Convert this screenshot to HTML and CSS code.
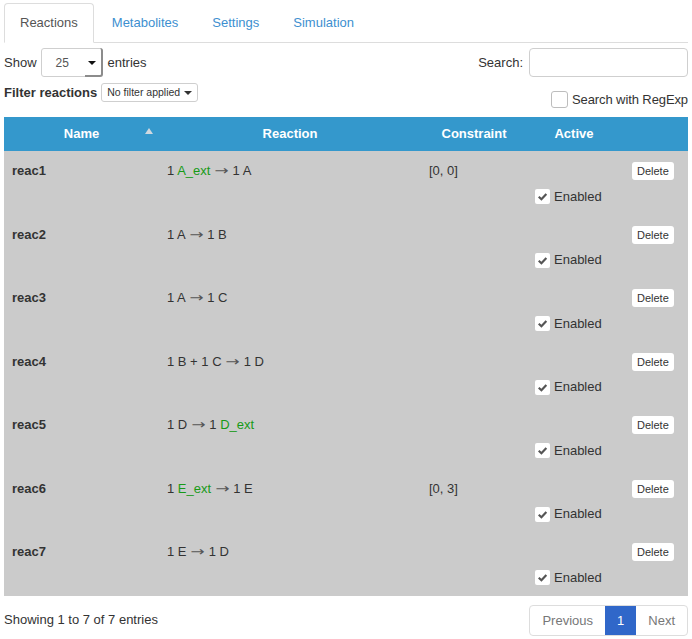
FILE: index.html
```html
<!DOCTYPE html>
<html>
<head>
<meta charset="utf-8">
<link rel="stylesheet" href="styles.css">
</head>
<body>
<div class="page">
  <ul class="tabs">
    <li class="tab active"><a>Reactions</a></li>
    <li class="tab"><a>Metabolites</a></li>
    <li class="tab"><a>Settings</a></li>
    <li class="tab"><a>Simulation</a></li>
  </ul>

  <div class="toolbar">
    <div class="length">
      <span>Show</span>
      <span class="select">25<span class="caret"></span></span>
      <span>entries</span>
    </div>
    <div class="search">
      <span>Search:</span>
      <span class="input"></span>
    </div>
  </div>

  <div class="toolbar2">
    <div class="filter">
      <b>Filter reactions</b>
      <span class="dropdown">No filter applied<span class="caret small"></span></span>
    </div>
    <label class="regexp"><span class="box"></span>Search with RegExp</label>
  </div>

  <table class="grid">
    <colgroup>
      <col class="c-name"><col class="c-reac"><col class="c-cons"><col class="c-act"><col class="c-del">
    </colgroup>
    <thead>
      <tr>
        <th class="sorted">Name<span class="sort"></span></th>
        <th>Reaction</th>
        <th>Constraint</th>
        <th>Active</th>
        <th></th>
      </tr>
    </thead>
    <tbody>
      <tr>
        <td class="name">reac1</td>
        <td>1 <span class="ext">A_ext</span> <span class="arr">→</span> 1 A</td>
        <td>[0, 0]</td>
        <td><label class="enabled"><span class="chk"><svg viewBox="0 0 14 14"><polyline points="3.5,7.2 6,9.6 10.6,4.6"/></svg></span>Enabled</label></td>
        <td class="del"><span class="btn">Delete</span></td>
      </tr>
      <tr>
        <td class="name">reac2</td>
        <td>1 A <span class="arr">→</span> 1 B</td>
        <td></td>
        <td><label class="enabled"><span class="chk"><svg viewBox="0 0 14 14"><polyline points="3.5,7.2 6,9.6 10.6,4.6"/></svg></span>Enabled</label></td>
        <td class="del"><span class="btn">Delete</span></td>
      </tr>
      <tr>
        <td class="name">reac3</td>
        <td>1 A <span class="arr">→</span> 1 C</td>
        <td></td>
        <td><label class="enabled"><span class="chk"><svg viewBox="0 0 14 14"><polyline points="3.5,7.2 6,9.6 10.6,4.6"/></svg></span>Enabled</label></td>
        <td class="del"><span class="btn">Delete</span></td>
      </tr>
      <tr>
        <td class="name">reac4</td>
        <td>1 B + 1 C <span class="arr">→</span> 1 D</td>
        <td></td>
        <td><label class="enabled"><span class="chk"><svg viewBox="0 0 14 14"><polyline points="3.5,7.2 6,9.6 10.6,4.6"/></svg></span>Enabled</label></td>
        <td class="del"><span class="btn">Delete</span></td>
      </tr>
      <tr>
        <td class="name">reac5</td>
        <td>1 D <span class="arr">→</span> 1 <span class="ext">D_ext</span></td>
        <td></td>
        <td><label class="enabled"><span class="chk"><svg viewBox="0 0 14 14"><polyline points="3.5,7.2 6,9.6 10.6,4.6"/></svg></span>Enabled</label></td>
        <td class="del"><span class="btn">Delete</span></td>
      </tr>
      <tr>
        <td class="name">reac6</td>
        <td>1 <span class="ext">E_ext</span> <span class="arr">→</span> 1 E</td>
        <td>[0, 3]</td>
        <td><label class="enabled"><span class="chk"><svg viewBox="0 0 14 14"><polyline points="3.5,7.2 6,9.6 10.6,4.6"/></svg></span>Enabled</label></td>
        <td class="del"><span class="btn">Delete</span></td>
      </tr>
      <tr>
        <td class="name">reac7</td>
        <td>1 E <span class="arr">→</span> 1 D</td>
        <td></td>
        <td><label class="enabled"><span class="chk"><svg viewBox="0 0 14 14"><polyline points="3.5,7.2 6,9.6 10.6,4.6"/></svg></span>Enabled</label></td>
        <td class="del"><span class="btn">Delete</span></td>
      </tr>
    </tbody>
  </table>

  <div class="footer">
    <div class="info">Showing 1 to 7 of 7 entries</div>
    <div class="pager">
      <span class="pg disabled">Previous</span>
      <span class="pg current">1</span>
      <span class="pg disabled">Next</span>
    </div>
  </div>
</div>
</body>
</html>
```

FILE: styles.css
```css
* { box-sizing: border-box; }

html, body {
  margin: 0;
  padding: 0;
  background: #fff;
}

body {
  font-family: "Liberation Sans", Arial, sans-serif;
  font-size: 13px;
  line-height: 18px;
  color: #333;
}

.page {
  padding: 3px 4px 0 4px;
}

/* Tabs */
.tabs {
  list-style: none;
  margin: 0;
  padding: 0;
  display: flex;
  border-bottom: 1px solid #ddd;
}

.tab {
  margin-bottom: -1px;
}

.tab a {
  display: block;
  margin-right: 2px;
  padding: 10px 15px 10px;
  border: 1px solid transparent;
  border-radius: 4px 4px 0 0;
  color: #3d8fd0;
}

.tab.active a {
  color: #555;
  background: #fff;
  border-color: #ddd #ddd transparent #ddd;
}

/* Toolbar rows */
.toolbar {
  display: flex;
  justify-content: space-between;
  align-items: center;
  margin-top: 5px;
  height: 29px;
}

.length,
.search {
  display: flex;
  align-items: center;
}

.length .select {
  position: relative;
  display: inline-flex;
  align-items: center;
  width: 62px;
  height: 29px;
  margin: 0 5px 0 4px;
  padding-left: 14px;
  border: 1px solid #cfcfcf;
  border-radius: 3px;
  font-size: 12px;
  color: #555;
}

.length .select::after {
  content: "";
  position: absolute;
  right: -1px;
  top: -1px;
  bottom: -1px;
  width: 16px;
  border-right: 2px solid #8c8c8c;
  border-bottom: 2px solid #8c8c8c;
  border-radius: 0 3px 3px 0;
}

.caret {
  position: absolute;
  right: 6px;
  top: 12px;
  width: 0;
  height: 0;
  border-left: 4px solid transparent;
  border-right: 4px solid transparent;
  border-top: 4px solid #111;
}

.search .input {
  display: block;
  width: 159px;
  height: 29px;
  margin-left: 6px;
  border: 1px solid #cfcfcf;
  border-radius: 4px;
}

.toolbar2 {
  display: flex;
  justify-content: space-between;
  align-items: flex-start;
  height: 35px;
  margin-top: 5px;
}

.filter {
  display: flex;
  align-items: center;
  margin-top: 1px;
  height: 19px;
}

.filter b {
  font-weight: bold;
}

.dropdown {
  display: inline-flex;
  align-items: center;
  margin-left: 4px;
  height: 19px;
  padding: 0 5px;
  border: 1px solid #cfcfcf;
  border-radius: 3px;
  font-size: 10.5px;
  line-height: 17px;
  color: #333;
}

.caret.small {
  position: static;
  margin-left: 4px;
  border-left-width: 4px;
  border-right-width: 4px;
  border-top: 4px solid #333;
}

.regexp {
  display: flex;
  align-items: center;
  margin-top: 9px;
  line-height: 17px;
  letter-spacing: -0.1px;
  white-space: nowrap;
}

.regexp .box {
  display: inline-block;
  width: 17px;
  height: 17px;
  margin-right: 4px;
  border: 1px solid #bdbdbd;
  border-radius: 3px;
  background: #fff;
}

/* Table */
.grid {
  width: 684px;
  border-collapse: collapse;
  table-layout: fixed;
}

.c-name { width: 155px; }
.c-reac { width: 262px; }
.c-cons { width: 106px; }
.c-act  { width: 94px; }
.c-del  { width: 67px; }

.grid th {
  position: relative;
  background: #3498cc;
  color: #fff;
  font-weight: bold;
  text-align: center;
  padding: 8px 8px;
  line-height: 18px;
  height: 34px;
}

.sort {
  position: absolute;
  right: 6px;
  top: 11px;
  width: 0;
  height: 0;
  border-left: 4px solid transparent;
  border-right: 4px solid transparent;
  border-bottom: 6px solid #cfd8df;
}

.grid td {
  background: #cbcbcb;
  vertical-align: top;
  padding: 11px 8px 9px 8px;
  line-height: 18px;
}

.grid td.name {
  font-weight: bold;
}

.grid td.del {
  padding-left: 11px;
}

.ext {
  color: #179a17;
}

.arr {
  display: inline-block;
  font-family: "DejaVu Sans", sans-serif;
  font-size: 13px;
  line-height: 18px;
  color: #555;
  transform: scaleX(1.3);
  margin: 0 2px;
}

.enabled {
  display: flex;
  align-items: center;
  margin-top: 25.5px;
  height: 18px;
}

.chk {
  display: inline-block;
  width: 15px;
  height: 15px;
  margin-right: 4px;
  background: #fff;
  border-radius: 2px;
}

.chk svg {
  display: block;
  width: 15px;
  height: 15px;
}

.chk polyline {
  fill: none;
  stroke: #555;
  stroke-width: 2;
}

.btn {
  display: inline-block;
  height: 18px;
  padding: 0 5px;
  background: #fff;
  border-radius: 3px;
  font-size: 11px;
  line-height: 18px;
  color: #333;
}

/* Footer */
.footer {
  display: flex;
  justify-content: space-between;
  align-items: center;
  margin-top: 9px;
}

.pager {
  display: flex;
  height: 31px;
  border: 1px solid #ddd;
  border-radius: 4px;
  overflow: hidden;
}

.pg {
  display: block;
  padding: 0 12px;
  line-height: 29px;
}

.pg.disabled {
  color: #777;
}

.pg.current {
  background: #3067c9;
  color: #fff;
}
```
